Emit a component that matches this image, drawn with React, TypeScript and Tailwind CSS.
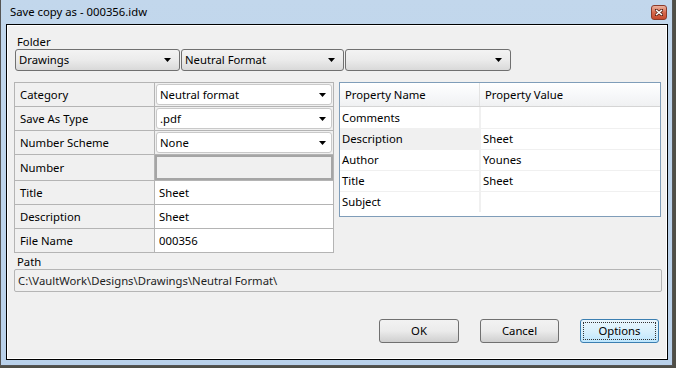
import React from 'react';

const Arrow: React.FC = () => (
  <svg width="7" height="4" viewBox="0 0 7 4" className="shrink-0">
    <polygon points="0,0 7,0 3.5,4" fill="#000" />
  </svg>
);

const FolderCombo: React.FC<{ label: string; width: string }> = ({ label, width }) => (
  <div
    className={`${width} h-[22px] flex items-center justify-between pl-[3px] pr-[8px] border border-[#707070] rounded-[3px] bg-gradient-to-b from-[#f3f3f3] via-[#ebebeb] to-[#d9d9d9]`}
  >
    <span>{label}</span>
    <Arrow />
  </div>
);

type Row = { label: string; kind: 'combo' | 'disabled' | 'text'; value?: string };

const fields: Row[] = [
  { label: 'Category', kind: 'combo', value: 'Neutral format' },
  { label: 'Save As Type', kind: 'combo', value: '.pdf' },
  { label: 'Number Scheme', kind: 'combo', value: 'None' },
  { label: 'Number', kind: 'disabled' },
  { label: 'Title', kind: 'text', value: 'Sheet' },
  { label: 'Description', kind: 'text', value: 'Sheet' },
  { label: 'File Name', kind: 'text', value: '000356' },
];

const props = [
  { name: 'Comments', value: '' },
  { name: 'Description', value: 'Sheet', active: true },
  { name: 'Author', value: 'Younes' },
  { name: 'Title', value: 'Sheet' },
  { name: 'Subject', value: '' },
];

const Button: React.FC<{ label: string; width: string; focused?: boolean }> = ({ label, width, focused }) => (
  <div
    className={
      focused
        ? `${width} h-[24px] rounded-[3px] border border-[#3c7fb1] bg-gradient-to-b from-[#eaf6fd] via-[#d9f0fc] to-[#bee6fd] p-[2px]`
        : `${width} h-[24px] rounded-[3px] border border-[#707070] bg-gradient-to-b from-[#f2f2f2] via-[#ebebeb] to-[#cfcfcf] p-[2px]`
    }
  >
    <div
      className={
        focused
          ? 'h-full flex items-center justify-center border border-dotted border-[#333]'
          : 'h-full flex items-center justify-center'
      }
    >
      {label}
    </div>
  </div>
);

export default function App() {
  return (
    <div className="w-[676px] h-[368px] bg-[#4f4f47] overflow-hidden font-['Noto_Sans',sans-serif] text-[11.3px] text-black leading-[14px]">
      <div className="w-[673px] h-[366px] bg-gradient-to-b from-[#c2d7ec] to-[#b9d1ea] border-l border-r border-b border-[#555] flex flex-col pl-[5px] pr-[4px] pb-[5px]">
        {/* Title bar */}
        <div className="h-[24px] flex items-center justify-between -ml-[5px] -mr-[4px] pl-[9px] pr-[5px]">
          <span>Save copy as - 000356.idw</span>
          <div className="w-[16px] h-[15px] rounded-[3px] border border-[#8b3a2a] bg-gradient-to-b from-[#eab3a0] via-[#d7694d] to-[#c64a2d] flex items-center justify-center">
            <svg width="8" height="7" viewBox="0 0 8 7">
              <path d="M1 1 L7 6 M7 1 L1 6" stroke="#5a2418" strokeWidth="3" strokeLinecap="square" />
              <path d="M1 1 L7 6 M7 1 L1 6" stroke="#fff" strokeWidth="1.6" />
            </svg>
          </div>
        </div>

        {/* Client area */}
        <div className="flex-1 border border-black">
          <div className="h-full border border-white bg-[#f0f0f0] pl-[6px] pr-[4px] pt-[9px] flex flex-col">
            <div className="pl-[3px] h-[14px]">Folder</div>
            <div className="flex gap-[1px] pl-[1px]">
              <FolderCombo label="Drawings" width="w-[165px]" />
              <FolderCombo label="Neutral Format" width="w-[163px]" />
              <FolderCombo label="" width="w-[166px]" />
            </div>

            <div className="flex gap-[5px] mt-[11px]">
              {/* Left field grid */}
              <div className="w-[320px] border-t border-l border-[#b4b4b4]">
                {fields.map(f => (
                  <div
                    key={f.label}
                    className={f.kind === 'disabled' ? 'flex h-[26px] border-b border-[#b4b4b4]' : 'flex h-[24px] border-b border-[#b4b4b4]'}
                  >
                    <div className="w-[140px] border-r border-[#b4b4b4] flex items-center pl-[5px]">{f.label}</div>
                    <div className="flex-1 border-r border-[#b4b4b4] flex">
                      {f.kind === 'combo' && (
                        <div className="flex-1 m-[1px] bg-white border border-[#c9c9c9] rounded-[3px] flex items-center justify-between pl-[3px] pr-[5px]">
                          <span>{f.value}</span>
                          <Arrow />
                        </div>
                      )}
                      {f.kind === 'disabled' && <div className="flex-1 bg-[#f0f0f0] border-2 border-[#a5a5a5]" />}
                      {f.kind === 'text' && <div className="flex-1 bg-white flex items-center pl-[4px]">{f.value}</div>}
                    </div>
                  </div>
                ))}
              </div>

              {/* Property grid */}
              <div className="w-[322px] h-[135px] self-start border border-[#7f9db9] bg-white">
                <div className="flex h-[24px] bg-gradient-to-b from-white via-[#f7f8fa] to-[#f0f1f2] border-b border-[#d5d5d5]">
                  <div className="w-[140px] border-r border-[#e3e3e3] flex items-center pl-[5px]">Property Name</div>
                  <div className="flex-1 flex items-center pl-[5px]">Property Value</div>
                </div>
                {props.map((p, i) => (
                  <div key={p.name} className={i === 0 ? 'flex h-[21px]' : 'flex h-[21px] border-t border-[#f0f0f0]'}>
                    <div className={p.active ? 'w-[139px] bg-[#f0f0f0] flex items-center pl-[2px]' : 'w-[139px] flex items-center pl-[2px]'}>
                      {p.name}
                    </div>
                    <div className="w-[2px] bg-[#f0f0f0]" />
                    <div className="flex-1 flex items-center pl-[2px]">{p.value}</div>
                  </div>
                ))}
              </div>
            </div>

            <div className="pl-[3px] mt-[2px] h-[14px]">Path</div>
            <div className="w-[648px] h-[23px] border border-[#b5b5b5] rounded-[2px] flex items-center pl-[3px] text-[#1e1e1e]">
              C:\VaultWork\Designs\Drawings\Neutral Format\
            </div>

            <div className="flex justify-end gap-[21px] mt-[27px] pr-[3px]">
              <Button label="OK" width="w-[80px]" />
              <Button label="Cancel" width="w-[79px]" />
              <Button label="Options" width="w-[79px]" focused />
            </div>
          </div>
        </div>
      </div>
    </div>
  );
}
